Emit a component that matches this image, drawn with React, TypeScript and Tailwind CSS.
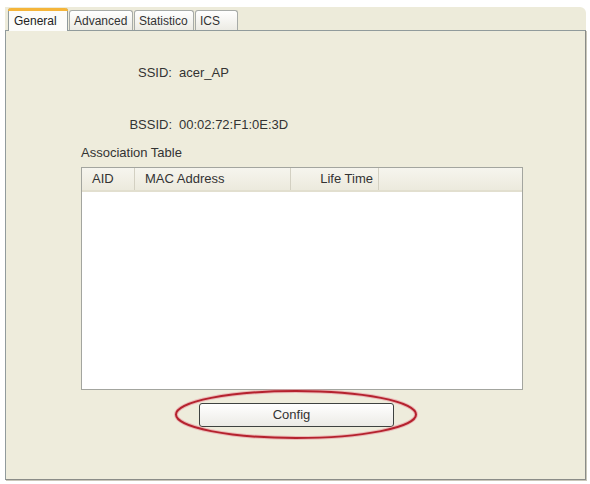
import React from "react";

const font = { fontFamily: '"Liberation Sans", Arial, sans-serif' };

function Tab({ label, active, width }: { label: string; active?: boolean; width: string }) {
  if (active) {
    return (
      <div className={`relative z-10 -mb-px flex h-[23px] items-center rounded-t-[3px] border-x border-[#919B9C] bg-[#FCFCFA] pl-[5px] pt-[2px] text-[#222] ${width}`}>
        <div className="absolute inset-x-[-1px] top-0 h-[3px] rounded-t-[3px] bg-[#F5B53A]" />
        {label}
      </div>
    );
  }
  return (
    <div className={`ml-px flex h-[20px] items-center rounded-t-[3px] border border-b-0 border-[#A7ABA8] bg-gradient-to-b from-[#FFFFFF] to-[#ECEBE4] pl-[4px] pt-[1px] text-[#333] ${width}`}>
      {label}
    </div>
  );
}

function Field({ label, value, className }: { label: string; value: string; className?: string }) {
  return (
    <div className={`flex h-[14px] items-center leading-[14px] ${className ?? ""}`}>
      <span className="w-[166px] text-right text-[#333]">{label}</span>
      <span className="ml-[7px] text-[#333]">{value}</span>
    </div>
  );
}

export default function App() {
  return (
    <div className="relative h-[484px] w-[590px] overflow-hidden bg-white text-[13px]" style={font}>
      <div className="ml-[5px] mt-[7px] flex h-[473px] w-[581px] flex-col rounded-tr-[6px] bg-[#EDEBDA]">
        {/* tab strip */}
        <div className="flex h-[23px] items-end pl-[3px] text-[12px]">
          <Tab label="General" active width="w-[60px]" />
          <Tab label="Advanced" width="w-[64px]" />
          <Tab label="Statistico" width="w-[60px]" />
          <Tab label="ICS" width="w-[43px]" />
        </div>

        {/* tab page */}
        <div className="flex flex-1 flex-col border border-[#919B9C] border-b-[#8A8C88] border-r-[#8A8C88] bg-[#EEECDC] shadow-[1px_1px_0_#C9C7BA]">
          <Field label="SSID:" value="acer_AP" className="mt-[35px]" />
          <Field label="BSSID:" value="00:02:72:F1:0E:3D" className="mt-[38px]" />

          <div className="ml-[75px] mt-[14px] h-[14px] leading-[14px] text-[#333]">Association Table</div>

          {/* association list */}
          <div className="ml-[75px] mt-[7px] flex h-[223px] w-[442px] flex-col border border-[#A3A59F] bg-white">
            <div className="flex h-[24px] items-stretch border-b-2 border-[#E2DFCF] bg-gradient-to-b from-[#F6F5EE] to-[#ECEADD] text-[#333]">
              <div className="flex w-[53px] items-center border-r border-[#D3D0C2] pl-[10px]">AID</div>
              <div className="flex w-[156px] items-center border-r border-[#D3D0C2] pl-[10px]">MAC Address</div>
              <div className="flex w-[88px] items-center justify-end border-r border-[#D3D0C2] pr-[5px]">Life Time</div>
              <div className="flex-1" />
            </div>
            <div className="flex-1 bg-white" />
          </div>

          <div className="ml-[193px] mt-[13px] flex h-[24px] w-[195px] items-center justify-center rounded-[3px] border border-[#3E4240] bg-gradient-to-b from-[#FFFFFF] to-[#ECEBE6] pr-[10px] text-[#333]">
            Config
          </div>
        </div>
      </div>

      {/* highlight ring around the button */}
      <svg className="pointer-events-none absolute left-0 top-0" width="590" height="484">
        <ellipse cx="296" cy="414.5" rx="120" ry="23.5" fill="none" stroke="#E89AA0" strokeWidth="4" opacity="0.6" />
        <ellipse cx="296" cy="414.5" rx="120" ry="23.5" fill="none" stroke="#B5222E" strokeWidth="2" />
      </svg>
    </div>
  );
}
